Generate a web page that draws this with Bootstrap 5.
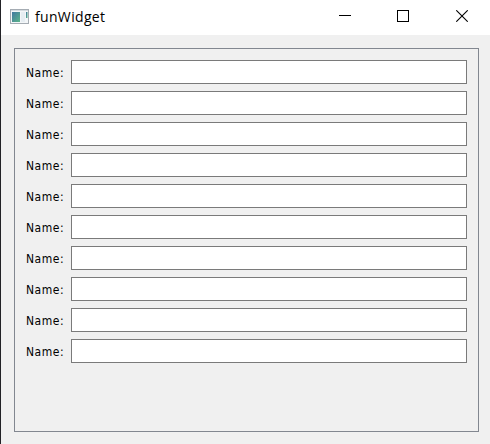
<!DOCTYPE html>
<html lang="en">
<head>
<meta charset="utf-8">
<meta name="viewport" content="width=device-width, initial-scale=1">
<title>funWidget</title>
<link href="https://cdn.jsdelivr.net/npm/bootstrap@5.3.0/dist/css/bootstrap.min.css" rel="stylesheet">
<style>
body { background: #f0f0f0; color: #000; font-family: "DejaVu Sans", sans-serif; }
.window { height: 444px; border-left: 1px solid #222226; }
.titlebar { height: 35px; padding: 0 0 3px 9px; }
.titlebar svg { display: block; flex: none; }
.caption { font: 14px/20px "Open Sans", sans-serif; letter-spacing: .33px; margin-left: 6px; padding-top: 2px; }
.win-btn { width: 58px; height: 32px; display: flex; align-items: center; justify-content: center; border: 0; padding: 0; background: none; }
.win-btn-close { padding-left: 2px; }
.frame { margin: 13px 11px 12px 13px; border: 1px solid #828790; padding: 11px 11px 0 11px; }
.field-stack { gap: 7px; }
.field-label { flex: none; width: 45px; height: 24px; padding-top: 1px; font-stretch: condensed; font-size: 12px; line-height: 24px; letter-spacing: .55px; }
.field-input { height: 24px; min-height: 0; padding: 0 3px; border: 1px solid #7a7a7a; background: #fff; font-size: 12px; }
</style>
</head>
<body>
<div class="window d-flex flex-column">
  <header class="titlebar d-flex align-items-center bg-white">
    <svg width="19" height="15" viewBox="0 0 19 15">
      <defs><linearGradient id="g" x1="0" y1="0" x2="1" y2="1"><stop offset="0" stop-color="#4278a0"/><stop offset="1" stop-color="#5cb58a"/></linearGradient></defs>
      <rect x=".5" y=".5" width="18" height="14" fill="#f3f6f8" stroke="#a5acb3"/>
      <rect x="1" y="1" width="17" height="1" fill="#d5dbe0"/>
      <rect x="2" y="3" width="8" height="10" fill="url(#g)"/>
      <rect x="11" y="3" width="4" height="10" fill="#e6edf2"/>
      <rect x="16" y="3" width="1.5" height="6" fill="url(#g)"/>
    </svg>
    <span class="caption">funWidget</span>
    <div class="d-flex ms-auto">
      <button class="win-btn" aria-label="Minimize"><svg width="12" height="12"><path d="M0 5.5h12" stroke="#000"/></svg></button>
      <button class="win-btn" aria-label="Maximize"><svg width="12" height="12"><rect x=".5" y=".5" width="11" height="11" fill="none" stroke="#000"/></svg></button>
      <button class="win-btn win-btn-close" aria-label="Close"><svg width="12" height="12"><path d="M.3.3l11.4 11.4M11.7.3L.3 11.7" stroke="#000" stroke-width="1.1"/></svg></button>
    </div>
  </header>
  <main class="frame flex-grow-1">
    <form class="field-stack d-flex flex-column">
      <div class="d-flex"><label class="field-label" for="n1">Name:</label><input id="n1" class="field-input form-control rounded-0"></div>
      <div class="d-flex"><label class="field-label" for="n2">Name:</label><input id="n2" class="field-input form-control rounded-0"></div>
      <div class="d-flex"><label class="field-label" for="n3">Name:</label><input id="n3" class="field-input form-control rounded-0"></div>
      <div class="d-flex"><label class="field-label" for="n4">Name:</label><input id="n4" class="field-input form-control rounded-0"></div>
      <div class="d-flex"><label class="field-label" for="n5">Name:</label><input id="n5" class="field-input form-control rounded-0"></div>
      <div class="d-flex"><label class="field-label" for="n6">Name:</label><input id="n6" class="field-input form-control rounded-0"></div>
      <div class="d-flex"><label class="field-label" for="n7">Name:</label><input id="n7" class="field-input form-control rounded-0"></div>
      <div class="d-flex"><label class="field-label" for="n8">Name:</label><input id="n8" class="field-input form-control rounded-0"></div>
      <div class="d-flex"><label class="field-label" for="n9">Name:</label><input id="n9" class="field-input form-control rounded-0"></div>
      <div class="d-flex"><label class="field-label" for="n10">Name:</label><input id="n10" class="field-input form-control rounded-0"></div>
    </form>
  </main>
</div>
<script src="https://cdn.jsdelivr.net/npm/bootstrap@5.3.0/dist/js/bootstrap.bundle.min.js"></script>
</body>
</html>
